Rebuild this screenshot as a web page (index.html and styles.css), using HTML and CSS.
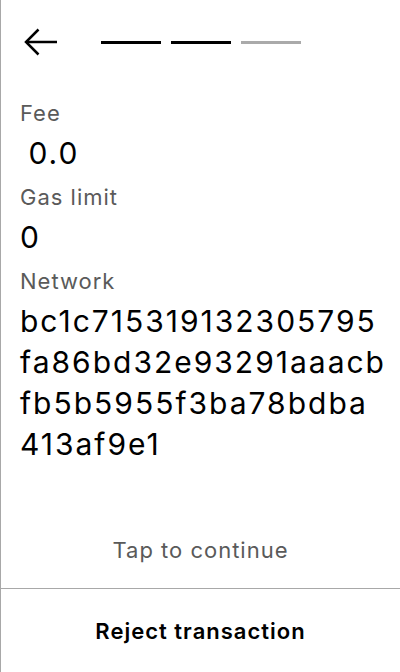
FILE: index.html
```html
<!DOCTYPE html>
<html lang="en">
<head>
<meta charset="utf-8">
<title>Confirm transaction</title>
<link rel="stylesheet" href="styles.css">
</head>
<body>
<div class="screen">
  <header class="top">
    <button class="back" aria-label="Back">
      <svg width="34" height="30" viewBox="0 0 34 30" fill="none" stroke="#000" stroke-width="2.5" stroke-linecap="butt" stroke-linejoin="miter">
        <path d="M2 15 H33"/>
        <path d="M14.5 2.5 L2 15 L14.5 27.5"/>
      </svg>
    </button>
    <div class="steps">
      <span class="step done"></span>
      <span class="step done"></span>
      <span class="step"></span>
    </div>
  </header>
  <main class="details">
    <div class="field">
      <div class="label">Fee</div>
      <div class="value fee"> 0.0</div>
    </div>
    <div class="field">
      <div class="label">Gas limit</div>
      <div class="value">0</div>
    </div>
    <div class="field">
      <div class="label">Network</div>
      <div class="value hash">
        <span class="chunk">bc1c715319132305795</span>
        <span class="chunk">fa86bd32e93291aaacb</span>
        <span class="chunk">fb5b5955f3ba78bdba</span>
        <span class="chunk">413af9e1</span>
      </div>
    </div>
  </main>
  <div class="tap">Tap to continue</div>
  <div class="reject">Reject transaction</div>
</div>
</body>
</html>
```
FILE: styles.css
```css
html, body {
  margin: 0;
  padding: 0;
  background: #fff;
}
body {
  font-family: Inter, "Noto Sans", sans-serif;
  color: #000;
}
.screen {
  box-sizing: border-box;
  width: 400px;
  height: 672px;
  border-left: 1px solid #a8a8a8;
  display: flex;
  flex-direction: column;
}
.top {
  display: flex;
  align-items: center;
  height: 84px;
  padding-left: 23px;
}
.back {
  border: 0;
  background: none;
  padding: 0;
  width: 34px;
  height: 30px;
  display: flex;
  margin-right: 43px;
}
.steps {
  display: flex;
  gap: 10px;
}
.step {
  width: 60px;
  height: 3px;
  background: #aaaaaa;
}
.step.done {
  background: #000;
}
.details {
  padding: 15px 10px 0 19px;
  display: flex;
  flex-direction: column;
  gap: 10px;
}
.field {
  display: flex;
  flex-direction: column;
  gap: 6px;
}
.label {
  font-size: 22px;
  line-height: 28px;
  letter-spacing: 1px;
  color: #5a5a5a;
}
.value {
  font-size: 30px;
  line-height: 40px;
  letter-spacing: 2px;
  white-space: pre;
}
.fee {
  margin-left: -2px;
}
.hash {
  display: flex;
  flex-direction: column;
  line-height: 41px;
  white-space: nowrap;
}
.chunk {
  display: block;
}
.tap {
  margin-top: auto;
  text-align: center;
  font-size: 22px;
  line-height: 28px;
  letter-spacing: 1px;
  color: #5a5a5a;
  padding-bottom: 24px;
  border-bottom: 1px solid #a8a8a8;
}
.reject {
  height: 83px;
  display: flex;
  align-items: center;
  justify-content: center;
  font-size: 22px;
  font-weight: 600;
  letter-spacing: 1px;
}
```
